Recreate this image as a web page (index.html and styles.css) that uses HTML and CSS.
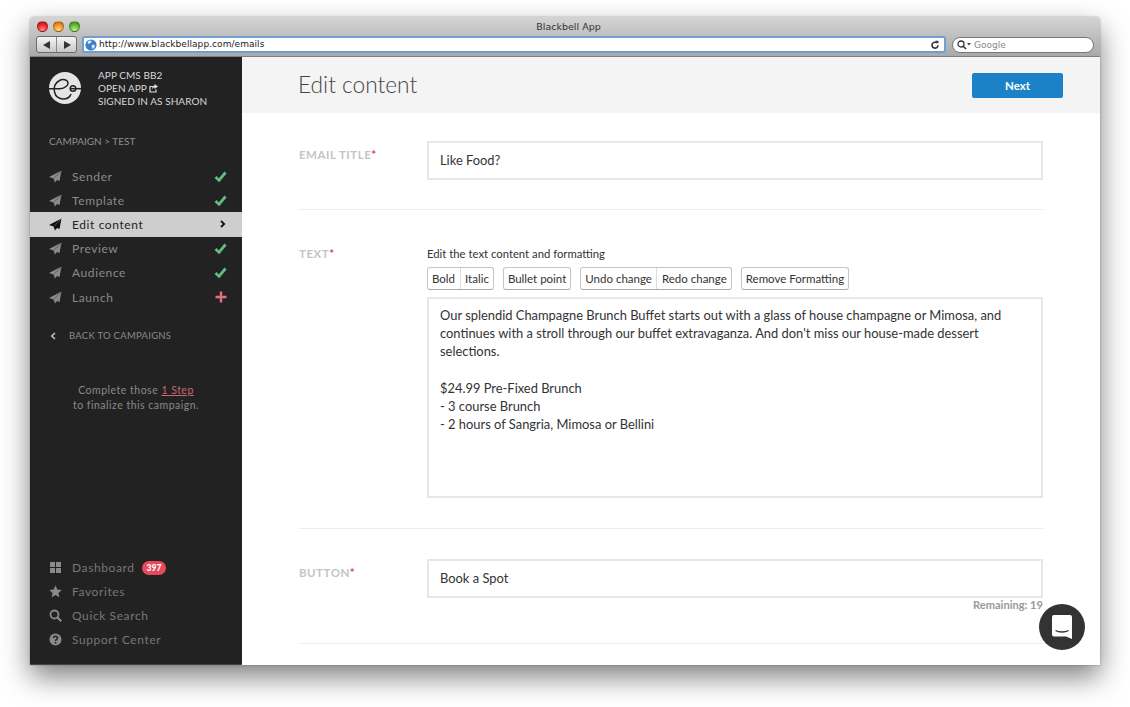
FILE: index.html
```html
<!DOCTYPE html>
<html lang="en">
<head>
<meta charset="utf-8">
<title>Blackbell App</title>
<link rel="stylesheet" href="styles.css">
</head>
<body>
<div class="window">
  <header class="chrome">
    <div class="title-row">
      <div class="lights"><span class="light red"></span><span class="light amber"></span><span class="light green"></span></div>
      <div class="win-title">Blackbell App</div>
    </div>
    <div class="tool-row">
      <div class="nav-btns">
        <span class="nav-btn"><svg width="8" height="8" viewBox="0 0 8 8"><path d="M7 0v8L0 4z" fill="#333"/></svg></span>
        <span class="nav-btn"><svg width="8" height="8" viewBox="0 0 8 8"><path d="M1 0v8l7-4z" fill="#333"/></svg></span>
      </div>
      <div class="url-bar">
        <svg class="globe" width="12" height="12" viewBox="0 0 12 12"><circle cx="6" cy="6" r="5.6" fill="#3b7fd0"/><path d="M3 2.2c1.600-1 3-.8 3.600 0 .3.800-.8 1.300-1.500 2-.7.600-1.700.5-2.500.2zM7 6c1.300-.5 2.600 0 3 .8-.3 1.500-1.200 2.800-2.200 3.200C7 9 6.300 7.200 7 6z" fill="#dfeaf6"/></svg>
        <span class="url-text">http://www.blackbellapp.com/emails</span>
        <svg class="reload" width="10" height="10" viewBox="0 0 10 10"><path d="M8 5.200a3 3 0 1 1-1-2.300" fill="none" stroke="#333" stroke-width="1.600"/><path d="M5.500 .6 8.600 1l-.4 3.100z" fill="#333"/></svg>
      </div>
      <div class="search-bar">
        <svg width="15" height="10" viewBox="0 0 15 10"><circle cx="4" cy="4" r="3" fill="none" stroke="#333" stroke-width="1.300"/><path d="M6 6l3 3" stroke="#333" stroke-width="1.600"/><path d="M10 3h4l-2 2.500z" fill="#444"/></svg>
        <span class="search-text">Google</span>
      </div>
    </div>
  </header>

  <div class="app">
    <aside class="sidebar">
      <div class="brand">
        <svg class="logo" width="32" height="32" viewBox="0 0 32 32"><circle cx="16" cy="16" r="16" fill="#e4e4e4"/><path d="M0 16.700h11C16 16.700 19.500 13 19 10.500 18.500 8 14 6.500 10.500 8.500 6 11 4.500 15 5.500 20 6.500 25 11 27 14 27c4 0 7-2 8-5" fill="none" stroke="#222" stroke-width="1.500"/><circle cx="24" cy="16.500" r="2.800" fill="none" stroke="#222" stroke-width="1.500"/><path d="M21 16.700h11" stroke="#222" stroke-width="1.500"/></svg>
        <div class="brand-text">
          <div>APP CMS BB2</div>
          <div>OPEN APP <svg width="9" height="9" viewBox="0 0 9 9"><path d="M7 5.500V8H1V2.500h3" fill="none" stroke="#ddd" stroke-width="1.200"/><path d="M5.500 0 9 2.500 5.500 5V3.500C4 3.500 3.500 4.500 3 5.500 3 3.500 4 1.800 5.500 1.500z" fill="#ddd"/></svg></div>
          <div>SIGNED IN AS SHARON</div>
        </div>
      </div>
      <div class="crumb">CAMPAIGN &gt; TEST</div>
      <nav class="steps">
        <a class="step"><svg class="plane" width="13" height="13" viewBox="0 0 13 13"><path d="M12.500.5 0 7l4.500 1.500L6 12.500 8 10l2.500 1z"/><path class="slit" d="M12.500.5 4.800 8.500"/></svg><span class="step-name">Sender</span><svg class="check" width="13" height="11" viewBox="0 0 13 11"><path d="M1.500 6l3.500 3.300L11.500 1.500" fill="none" stroke="#62bd7c" stroke-width="2.800"/></svg></a>
        <a class="step"><svg class="plane" width="13" height="13" viewBox="0 0 13 13"><path d="M12.500.5 0 7l4.500 1.500L6 12.500 8 10l2.500 1z"/><path class="slit" d="M12.500.5 4.800 8.500"/></svg><span class="step-name">Template</span><svg class="check" width="13" height="11" viewBox="0 0 13 11"><path d="M1.500 6l3.500 3.300L11.500 1.500" fill="none" stroke="#62bd7c" stroke-width="2.800"/></svg></a>
        <a class="step current"><svg class="plane" width="13" height="13" viewBox="0 0 13 13"><path d="M12.500.5 0 7l4.500 1.500L6 12.500 8 10l2.500 1z"/><path class="slit" d="M12.500.5 4.800 8.500"/></svg><span class="step-name">Edit content</span><svg class="chev" width="6" height="8" viewBox="0 0 6 8"><path d="M1 1l3.200 3L1 7" fill="none" stroke="#111" stroke-width="1.800"/></svg></a>
        <a class="step"><svg class="plane" width="13" height="13" viewBox="0 0 13 13"><path d="M12.500.5 0 7l4.500 1.500L6 12.500 8 10l2.500 1z"/><path class="slit" d="M12.500.5 4.800 8.500"/></svg><span class="step-name">Preview</span><svg class="check" width="13" height="11" viewBox="0 0 13 11"><path d="M1.500 6l3.500 3.300L11.500 1.500" fill="none" stroke="#62bd7c" stroke-width="2.800"/></svg></a>
        <a class="step"><svg class="plane" width="13" height="13" viewBox="0 0 13 13"><path d="M12.500.5 0 7l4.500 1.500L6 12.500 8 10l2.500 1z"/><path class="slit" d="M12.500.5 4.800 8.500"/></svg><span class="step-name">Audience</span><svg class="check" width="13" height="11" viewBox="0 0 13 11"><path d="M1.500 6l3.500 3.300L11.500 1.500" fill="none" stroke="#62bd7c" stroke-width="2.800"/></svg></a>
        <a class="step"><svg class="plane" width="13" height="13" viewBox="0 0 13 13"><path d="M12.500.5 0 7l4.500 1.500L6 12.500 8 10l2.500 1z"/><path class="slit" d="M12.500.5 4.800 8.500"/></svg><span class="step-name">Launch</span><svg class="plus" width="12" height="12" viewBox="0 0 12 12"><path d="M6 .5v11M.5 6h11" stroke="#e2707a" stroke-width="2.400"/></svg></a>
      </nav>
      <a class="back"><svg width="6" height="8" viewBox="0 0 6 8"><path d="M5 1 1.800 4 5 7" fill="none" stroke="#bbb" stroke-width="1.700"/></svg><span>BACK TO CAMPAIGNS</span></a>
      <p class="notice">Complete those <a class="notice-link">1 Step</a><br>to finalize this campaign.</p>
      <nav class="bottom-nav">
        <a class="bottom-item"><svg class="bi" width="13" height="13" viewBox="0 0 13 13"><path d="M1 1h5v5H1zM7 1h5v5H7zM1 7h5v5H1zM7 7h5v5H7z"/></svg><span>Dashboard</span><span class="badge">397</span></a>
        <a class="bottom-item"><svg class="bi" width="13" height="13" viewBox="0 0 13 13"><path d="m6.500.5 1.800 4 4.400.5-3.300 2.900.9 4.400-3.800-2.200-3.800 2.200.9-4.400L.3 5l4.400-.5z"/></svg><span>Favorites</span></a>
        <a class="bottom-item"><svg class="bi" width="13" height="13" viewBox="0 0 13 13"><circle cx="5.500" cy="5.500" r="4" fill="none" stroke="#8a8a8a" stroke-width="1.800"/><path d="m8.500 8.500 3.700 3.700" stroke="#8a8a8a" stroke-width="2.200"/></svg><span>Quick Search</span></a>
        <a class="bottom-item"><svg class="bi" width="13" height="13" viewBox="0 0 13 13"><circle cx="6.500" cy="6.500" r="6"/><path d="M4.500 5c0-2.500 4-2.500 4 0 0 1.300-2 1.300-2 3" fill="none" stroke="#222" stroke-width="1.500"/><path d="M5.700 9h1.600v1.500H5.700z" fill="#222"/></svg><span>Support Center</span></a>
      </nav>
    </aside>

    <main class="main">
      <div class="page-head">
        <h1 class="page-title">Edit content</h1>
        <button class="next-btn">Next</button>
      </div>
      <div class="form">
        <section class="row row-title">
          <div class="label">EMAIL TITLE<span class="req">*</span></div>
          <div class="field"><div class="input">Like Food?</div></div>
        </section>
        <section class="row row-text">
          <div class="label">TEXT<span class="req">*</span></div>
          <div class="field">
            <div class="hint">Edit the text content and formatting</div>
            <div class="toolbar">
              <div class="btn-group"><span class="tb">Bold</span><span class="tb">Italic</span></div>
              <div class="btn-group"><span class="tb">Bullet point</span></div>
              <div class="btn-group"><span class="tb">Undo change</span><span class="tb">Redo change</span></div>
              <div class="btn-group"><span class="tb">Remove Formatting</span></div>
            </div>
            <div class="textarea">
              <p>Our splendid Champagne Brunch Buffet starts out with a glass of house champagne or Mimosa, and continues with a stroll through our buffet extravaganza. And don't miss our house-made dessert selections.</p>
              <p>$24.99 Pre-Fixed Brunch<br>- 3 course Brunch<br>- 2 hours of Sangria, Mimosa or Bellini</p>
            </div>
          </div>
        </section>
        <section class="row row-button">
          <div class="label">BUTTON<span class="req">*</span></div>
          <div class="field">
            <div class="input">Book a Spot</div>
            <div class="remaining">Remaining: 19</div>
          </div>
        </section>
      </div>
      <div class="chat-bubble">
        <svg width="20" height="24" viewBox="0 0 20 24"><path d="M2 0h16a2 2 0 0 1 2 2v22l-6-2.500H2a2 2 0 0 1-2-2V2a2 2 0 0 1 2-2z" fill="#fff"/><path d="M3.500 15.500c3.500 2 9.500 2 13 0" fill="none" stroke="#333" stroke-width="1.300"/></svg>
      </div>
    </main>
  </div>
</div>
</body>
</html>
```
FILE: styles.css
```css
* { box-sizing: border-box; }
html, body { margin: 0; height: 100%; }
body {
  background: #fff;
  padding: 17px 30px 0;
  overflow: hidden;
  font-family: Lato, "Open Sans", sans-serif;
  color: #333;
}
.window {
  width: 1070px;
  height: 648px;
  display: flex;
  flex-direction: column;
  box-shadow: 0 12px 28px rgba(0,0,0,.5), 0 0 2px rgba(0,0,0,.35);
  border-radius: 4px 4px 0 0;
  background: #fff;
}
.chrome {
  height: 40px;
  flex: none;
  background: linear-gradient(#d4d4d4, #a9a9a9);
  border-bottom: 1px solid #7f7f7f;
  border-radius: 4px 4px 0 0;
  display: flex;
  flex-direction: column;
}
.title-row {
  height: 18px;
  display: flex;
  align-items: center;
  padding: 1px 0 0 7px;
}
.lights { display: flex; gap: 5px; }
.light { width: 11px; height: 11px; border-radius: 50%; border: 1px solid rgba(0,0,0,.25); }
.red { background: radial-gradient(circle at 50% 85%, #ff8a84, #ea1f2a 60%, #b5101a); }
.amber { background: radial-gradient(circle at 50% 85%, #ffd98a, #f08a1c 60%, #b9640e); }
.green { background: radial-gradient(circle at 50% 85%, #bdf08c, #5cb030 60%, #3c8a1e); }
.win-title {
  flex: 1;
  text-align: center;
  font: 9.500px/18px "DejaVu Sans", sans-serif;
  color: #333;
  margin-right: 43px;
}
.tool-row { display: flex; align-items: center; height: 19px; padding: 0 6px; }
.nav-btns {
  display: flex;
  width: 41px;
  height: 17px;
  border: 1px solid #6b6b6b;
  border-radius: 3px;
  background: linear-gradient(#f4f4f4, #c8c8c8);
  flex: none;
}
.nav-btn { flex: 1; display: flex; align-items: center; justify-content: center; }
.nav-btn + .nav-btn { border-left: 1px solid #8a8a8a; }
.url-bar {
  width: 864px;
  margin-left: 5px;
  height: 17px;
  background: #fff;
  border: 2px solid #6f9fd1;
  border-radius: 3px;
  display: flex;
  align-items: center;
  padding: 0 3px 0 1px;
  flex: none;
}
.url-text {
  flex: 1;
  margin-left: 2px;
  font: 9px/13px "DejaVu Sans", sans-serif;
  letter-spacing: .06px;
  color: #222;
}
.reload { flex: none; margin-right: 1px; }
.search-bar {
  margin-left: 6px;
  flex: 1;
  height: 16px;
  background: #fff;
  border: 1px solid #777;
  border-radius: 8px;
  display: flex;
  align-items: center;
  padding-left: 4px;
}
.search-text { font: 9px "DejaVu Sans", sans-serif; color: #888; margin-left: 2px; }

.app { flex: 1; display: flex; min-height: 0; }
.sidebar {
  width: 212px;
  flex: none;
  background: #222;
  display: flex;
  flex-direction: column;
  color: #8a8a8a;
  box-shadow: inset 0 -1px 0 #444;
}
.brand { display: flex; padding: 12px 0 0 19px; height: 78px; }
.logo { margin-top: 3px; flex: none; }
.brand-text {
  margin-left: 17px;
  font-size: 10px;
  line-height: 13px;
  letter-spacing: .05px;
  color: #d8d8d8;
}
.brand-text svg { vertical-align: -1px; }
.crumb {
  padding-left: 19px;
  font-size: 10px;
  line-height: 13px;
  color: #8f8f8f;
  height: 29px;
}
.steps { display: flex; flex-direction: column; }
.step {
  height: 24.200px;
  display: flex;
  align-items: center;
  padding: 0 15px 0 19px;
  font-size: 12px;
  letter-spacing: .6px;
  color: #8a8a8a;
}
.plane { fill: #8a8a8a; flex: none; }
.slit { fill: none; stroke: #222; stroke-opacity: .45; stroke-width: .8; }
.step-name { flex: 1; margin-left: 10px; }
.current { background: #cecece; color: #222; }
.current .plane { fill: #111; }
.current .slit { stroke: #cecece; }
.chev { margin-right: 1px; }
.back {
  margin-top: 16.600px;
  height: 20px;
  padding-left: 20px;
  display: flex;
  align-items: center;
  gap: 13px;
  font-size: 9.500px;
  letter-spacing: .27px;
  color: #8a8a8a;
}
.notice {
  margin: 37px 0 0;
  text-align: center;
  font-size: 10.500px;
  line-height: 15.500px;
  letter-spacing: .5px;
  color: #8a8a8a;
}
.notice-link { color: #c5686f; text-decoration: underline; }
.bottom-nav { margin-top: auto; padding-bottom: 13.500px; display: flex; flex-direction: column; }
.bottom-item {
  height: 24px;
  display: flex;
  align-items: center;
  padding-left: 19px;
  font-size: 12px;
  letter-spacing: .6px;
  color: #777;
}
.bi { fill: #8a8a8a; flex: none; margin-right: 10px; }
.badge {
  margin-left: 7px;
  height: 14px;
  padding: 0 5px;
  border-radius: 7px;
  background: #e8485c;
  color: #fff;
  font-size: 8.500px;
  font-weight: 900;
  letter-spacing: 0;
  line-height: 14px;
}

.main { flex: 1; position: relative; overflow: hidden; background: #fff; min-width: 0; }
.page-head {
  height: 56px;
  background: #f4f4f4;
  display: flex;
  align-items: center;
  justify-content: space-between;
  padding: 0 37px 0 56px;
}
.page-title { margin: 0 0 2px; font-size: 22.700px; font-weight: 300; color: #444; }
.next-btn {
  width: 91px;
  height: 25px;
  margin-top: 1px;
  border: 0;
  border-radius: 2px;
  background: #1c82c8;
  color: #fff;
  font: 700 11.500px Lato, sans-serif;
}
.form { padding: 0 57px; }
.row { display: flex; border-bottom: 1px solid #ececec; }
.row-title { padding-top: 28px; height: 97px; }
.row-text { padding-top: 37px; height: 319px; }
.row-button { padding-top: 30px; height: 115px; }
.label {
  width: 128px;
  flex: none;
  font-size: 11.500px;
  font-weight: 700;
  letter-spacing: .5px;
  color: #c4c4c4;
  line-height: 14px;
  padding-top: 7px;
}
.row-text .label { padding-top: 0; }
.req { color: #d8485a; }
.field { flex: 1; min-width: 0; }
.input {
  height: 39px;
  border: 2px solid #e7e7e7;
  padding: 0 11px 2px;
  display: flex;
  align-items: center;
  font-size: 12.900px;
  color: #333;
}
.hint { font-size: 11.300px; line-height: 14px; color: #333; height: 20px; }
.toolbar { display: flex; gap: 9px; margin-bottom: 7px; }
.btn-group {
  display: flex;
  height: 23px;
  border: 1px solid #c6c6c6;
  border-bottom-color: #aaa;
  border-radius: 3px;
  font-size: 11.500px;
  line-height: 21px;
  color: #333;
}
.tb { padding: 0 4px; }
.tb:first-child:not(:last-child) { padding-right: 4.500px; }
.tb + .tb { border-left: 1px solid #ddd; padding-left: 4.500px; }
.textarea {
  height: 201px;
  border: 2px solid #e7e7e7;
  padding: 7px 11px;
  font-size: 12.900px;
  line-height: 18px;
  color: #333;
}
.textarea p { margin: 0 0 19px; }
.remaining {
  text-align: right;
  font-size: 11.100px;
  font-weight: 700;
  line-height: 14px;
  color: #999;
}
.chat-bubble {
  position: absolute;
  right: 15px;
  bottom: 15px;
  width: 46px;
  height: 46px;
  border-radius: 50%;
  background: #333;
  display: flex;
  align-items: center;
  justify-content: center;
}
```
